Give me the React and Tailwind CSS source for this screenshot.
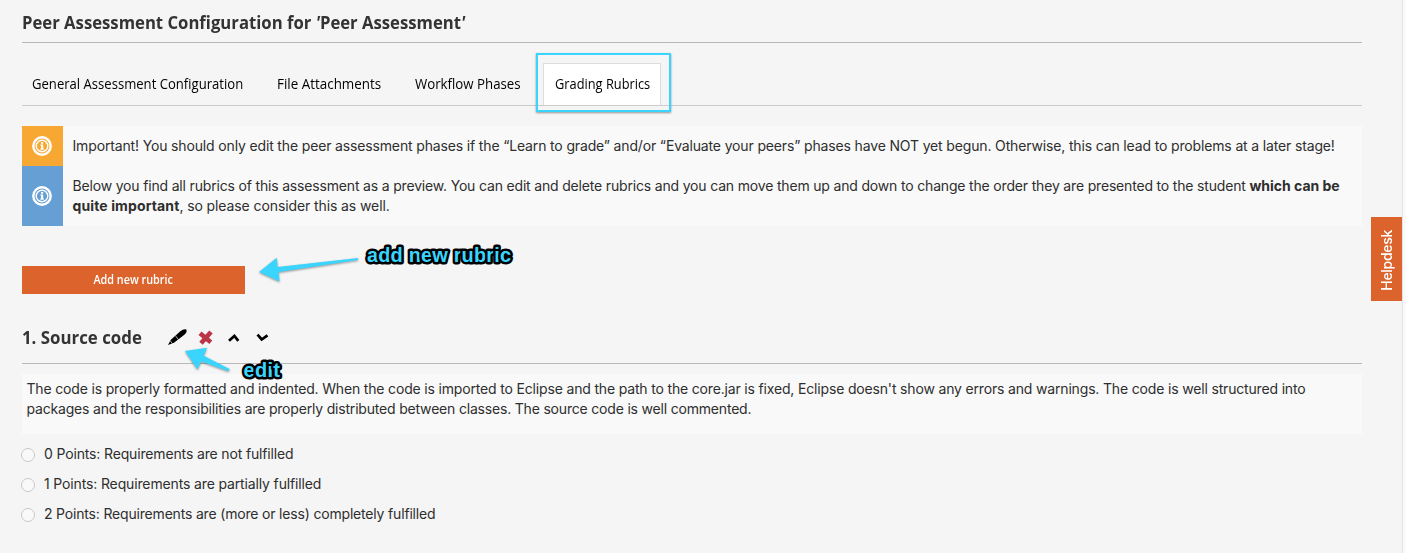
import React from "react";

const display = "font-['Open_Sans','Noto_Sans',sans-serif]";

function InfoIcon() {
  return (
    <svg className="mr-[2px]" width="20" height="20" viewBox="0 0 20 20" fill="none">
      <circle cx="10" cy="10" r="8.7" stroke="#fff" strokeWidth="2.4" />
      <circle cx="10" cy="10" r="5.8" stroke="#fff" strokeWidth="1.4" />
      <path d="M9 6h2.2v1.8H9zM8.4 8.5h2.8v4h.6v1.2H8.3v-1.2H9V9.7h-.6z" fill="#fff" />
    </svg>
  );
}

function Tab({ children, width, scale }) {
  return (
    <div className={`flex h-[42px] items-center pb-[2px] ${width}`}>
      <span className={`inline-block origin-left whitespace-nowrap ${scale}`}>{children}</span>
    </div>
  );
}

function Option({ children, spacing }) {
  return (
    <label className="flex h-[30px] items-center">
      <span className="mt-[1px] -ml-px size-[14px] rounded-full border border-[#c9c9c9] bg-[#f9f9f9]" />
      <span className={`ml-[9px] whitespace-nowrap leading-5 ${spacing}`}>{children}</span>
    </label>
  );
}

export default function App() {
  return (
    <div className="relative h-[553px] w-[1406px] overflow-hidden bg-[#f5f5f5] font-['Inter',sans-serif] text-[14px] text-[#2e2e2e]">
      <main className="ml-[22px] flex w-[1340px] flex-col">
        <header className={`flex h-[43px] items-center border-b border-[#b8b8b8] pt-[2px] text-[18px] font-bold text-[#333] ${display}`}>
          <h1 className="origin-left scale-x-[0.927] whitespace-nowrap">Peer Assessment Configuration for <i>'</i>Peer Assessment<i>'</i></h1>
        </header>

        <nav className={`flex h-[63px] items-end border-b border-[#ccc] text-[14px] text-black ${display}`}>
          <Tab width="ml-[10px] w-[245px]" scale="scale-x-[0.935]">General Assessment Configuration</Tab>
          <Tab width="w-[138px]" scale="scale-x-[0.958]">File Attachments</Tab>
          <Tab width="w-[128px]" scale="scale-x-[0.946]">Workflow Phases</Tab>
          <Tab width="w-[118px] border border-b-0 border-[#ddd] bg-white pl-[11px]" scale="scale-x-[0.915]">Grading Rubrics</Tab>
        </nav>

        <section className="mt-5 bg-[#f9f9f9]">
          <div className="flex h-10">
            <div className="flex w-[41px] shrink-0 items-center justify-center bg-[#f7a833]"><InfoIcon /></div>
            <p className="ml-[9.5px] self-center whitespace-nowrap leading-5 tracking-[-0.15px]">
              Important! You should only edit the peer assessment phases if the “Learn to grade” and/or “Evaluate your peers” phases have NOT yet begun. Otherwise, this can lead to problems at a later stage!
            </p>
          </div>
          <div className="flex h-[60px]">
            <div className="flex w-[41px] shrink-0 items-center justify-center bg-[#659fd3]"><InfoIcon /></div>
            <p className="ml-[9.5px] self-center whitespace-nowrap leading-5">
              <span className="tracking-[-0.175px]">Below you find all rubrics of this assessment as a preview. You can edit and delete rubrics and you can move them up and down to change the order they are presented to the student <b className="tracking-[-0.02px]">which can be</b></span>
              <br />
              <b className="tracking-[0.12px]">quite important</b><span className="tracking-[-0.1px]">, so please consider this as well.</span>
            </p>
          </div>
        </section>

        <button className={`mt-10 flex h-7 w-[223px] items-center justify-center bg-[#dd632d] text-[12px] font-semibold text-white ${display}`}>
          <span className="scale-x-[0.9]">Add new rubric</span>
        </button>

        <div className={`flex h-[70px] items-center border-b border-[#b8b8b8] pt-[17px] text-[#333] ${display}`}>
          <h2 className="w-[145px] text-[18px] font-bold whitespace-nowrap"><span className="inline-block origin-left scale-x-[0.935]">1. Source code</span></h2>
          <svg width="104" height="20" viewBox="0 0 104 20" fill="none">
            <path d="M1 18L3.6 13L13 4.6Q16.8 1.6 19.4 2.6Q20.6 5.4 16.4 8.6L7 15.8Z" fill="#000" />
            <path d="M2.6 13.2L5.4 16.6M8.4 8.6L11.4 12.6" stroke="#f5f5f5" strokeWidth=".7" />
            <path d="M33 6.2L43.8 15.2M44 5L34 16.2" stroke="#bb3549" strokeWidth="4.6" />
            <path d="M62 13.8L67.4 9L71.3 13.8" stroke="#000" strokeWidth="2.7" />
            <path d="M90.5 7.7L94.7 12.5L100.5 8.3" stroke="#000" strokeWidth="2.7" />
          </svg>
        </div>

        <p className="mt-[10px] h-[60px] bg-[#f9f9f9] pt-[5px] pl-[4.5px] leading-5 whitespace-nowrap">
          <span className="tracking-[-0.168px]">The code is properly formatted and indented. When the code is imported to Eclipse and the path to the core.jar is fixed, Eclipse doesn't show any errors and warnings. The code is well structured into</span>
          <br />
          <span className="tracking-[-0.19px]">packages and the responsibilities are properly distributed between classes. The source code is well commented.</span>
        </p>

        <div className="mt-[5px] flex flex-col">
          <Option spacing="tracking-[-0.15px]">0 Points: Requirements are not fulfilled</Option>
          <Option spacing="tracking-[-0.14px]">1 Points: Requirements are partially fulfilled</Option>
          <Option spacing="tracking-[-0.18px]">2 Points: Requirements are (more or less) completely fulfilled</Option>
        </div>
      </main>

      <div className="absolute top-0 right-0 h-full w-1 border-l border-[#e2e2e2] bg-[#fafafa]" />
      <div className="absolute top-[217px] left-[1371px] flex h-[84px] w-[31px] items-center justify-center bg-[#dd632d] pt-[2px] text-white">
        <span className="rotate-180 font-medium tracking-[-0.3px] [writing-mode:vertical-rl]">Helpdesk</span>
      </div>

      <div className="absolute top-[53px] left-[536px] h-[59px] w-[135px] border-[2.5px] border-[#3ad5ff] shadow-[0_1px_2px_rgba(0,0,0,0.4)]" />
      <svg className="absolute top-[235px] left-[150px] drop-shadow-[0_1px_1px_rgba(0,0,0,0.4)]" width="380" height="150" viewBox="150 235 380 150">
        <path d="M259 272L276.7 257.8L277.6 267L358 258V260L278.6 272L279.5 281.5Z" fill="#3ad5ff" />
        <path d="M185 351L207 347.8L203.8 355.8L229.6 369L228.6 371.2L201.2 361.5L197.5 369.5Z" fill="#3ad5ff" />
      </svg>
      <svg className="absolute top-[235px] left-[230px]" width="300" height="155" viewBox="230 235 300 155" fill="#3ad5ff" stroke="#000" strokeWidth="5" strokeLinejoin="round" paintOrder="stroke" fontFamily="'Liberation Sans',sans-serif" fontWeight="700" fontSize="20">
        <text x="367" y="261.5" textLength="144">add new rubric</text>
        <text x="243.5" y="376.5" textLength="36.5">edit</text>
      </svg>
    </div>
  );
}
